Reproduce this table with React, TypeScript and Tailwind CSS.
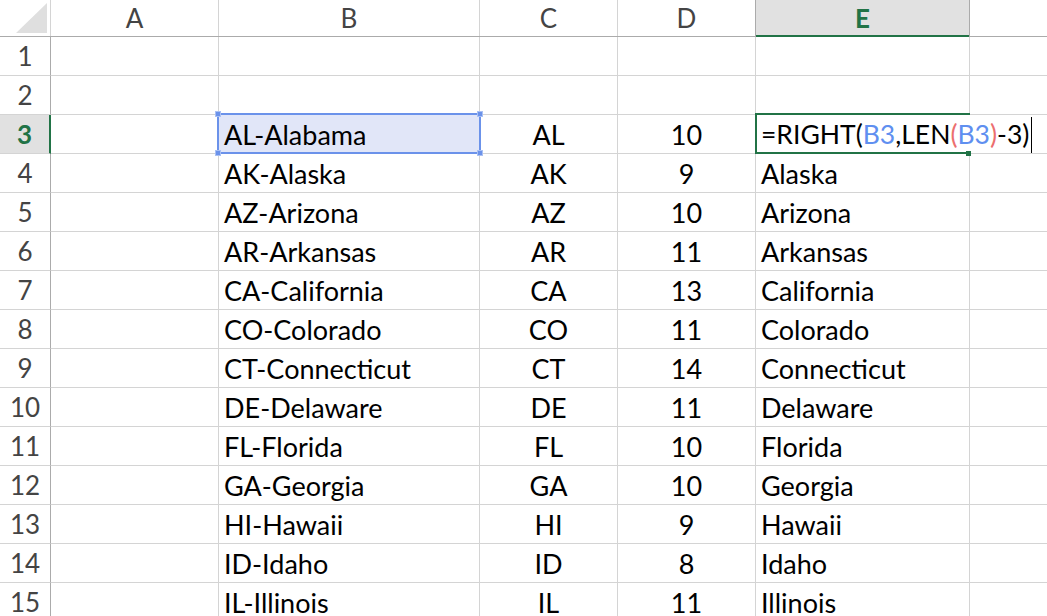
const FONT = { fontFamily: "Lato, 'Open Sans', sans-serif" };

type Row = { n: number; b: string; c: string; d: string; e: string };

const rows: Row[] = [
  { n: 1, b: '', c: '', d: '', e: '' },
  { n: 2, b: '', c: '', d: '', e: '' },
  { n: 3, b: 'AL-Alabama', c: 'AL', d: '10', e: '' },
  { n: 4, b: 'AK-Alaska', c: 'AK', d: '9', e: 'Alaska' },
  { n: 5, b: 'AZ-Arizona', c: 'AZ', d: '10', e: 'Arizona' },
  { n: 6, b: 'AR-Arkansas', c: 'AR', d: '11', e: 'Arkansas' },
  { n: 7, b: 'CA-California', c: 'CA', d: '13', e: 'California' },
  { n: 8, b: 'CO-Colorado', c: 'CO', d: '11', e: 'Colorado' },
  { n: 9, b: 'CT-Connecticut', c: 'CT', d: '14', e: 'Connecticut' },
  { n: 10, b: 'DE-Delaware', c: 'DE', d: '11', e: 'Delaware' },
  { n: 11, b: 'FL-Florida', c: 'FL', d: '10', e: 'Florida' },
  { n: 12, b: 'GA-Georgia', c: 'GA', d: '10', e: 'Georgia' },
  { n: 13, b: 'HI-Hawaii', c: 'HI', d: '9', e: 'Hawaii' },
  { n: 14, b: 'ID-Idaho', c: 'ID', d: '8', e: 'Idaho' },
  { n: 15, b: 'IL-Illinois', c: 'IL', d: '11', e: 'Illinois' },
];

function Handle({ className }: { className: string }) {
  return <div className={`absolute w-[6px] h-[6px] bg-[#6b92ea] border border-[#a9c0f3] z-20 ${className}`} />;
}

function Formula() {
  return (
    <div className="relative z-10 flex items-center whitespace-nowrap pl-[5px] pt-[2px] h-full text-black text-[26.5px]">
      <span className="shrink-0">=RIGHT(</span>
      <span className="shrink-0 text-[#5f8ff0]">B3</span>
      <span className="shrink-0">,LEN</span>
      <span className="shrink-0 text-[#ec6f6f]">(</span>
      <span className="shrink-0 text-[#5f8ff0]">B3</span>
      <span className="shrink-0 text-[#ec6f6f]">)</span>
      <span className="shrink-0">-3)</span>
      <span className="shrink-0 ml-[2px] w-px h-[36px] bg-black" />
    </div>
  );
}

export default function App() {
  return (
    <div className="w-[1047px] h-[616px] overflow-hidden bg-white" style={FONT}>
      {/* column headers */}
      <div className="flex h-[37px] border-b border-[#ababab] text-[26px] text-[#444]">
        <div className="w-[51px] shrink-0 border-r border-[#d4d4d4] relative">
          <svg className="absolute left-0 top-0" width="50" height="36" viewBox="0 0 50 36">
            <polygon points="16,33 47,33 47,3" fill="#dfdfdf" />
          </svg>
        </div>
        <div className="w-[168px] shrink-0 border-r border-[#d4d4d4] flex items-center justify-center">A</div>
        <div className="w-[261px] shrink-0 border-r border-[#d4d4d4] flex items-center justify-center">B</div>
        <div className="w-[138px] shrink-0 border-r border-[#d4d4d4] flex items-center justify-center">C</div>
        <div className="w-[138px] shrink-0 border-r border-[#ababab] flex items-center justify-center">D</div>
        <div className="w-[214px] shrink-0 border-r border-[#ababab] bg-[#e1e1e1] flex items-center justify-center font-bold text-[#217346] relative">
          E
          <div className="absolute left-0 right-0 bottom-[-1px] h-[2px] bg-[#217346]" />
        </div>
        <div className="w-[166px] shrink-0 flex items-center justify-center">F</div>
      </div>

      {rows.map((r) => {
        const active = r.n === 3;
        return (
          <div key={r.n} className="flex h-[39px] text-[27px]">
            <div
              className={`w-[51px] shrink-0 border-b border-[#d4d4d4] flex items-center justify-center text-[26px] pt-[1px] ${
                active
                  ? 'bg-[#e1e1e1] text-[#217346] font-bold border-r-2 border-r-[#217346]'
                  : 'text-[#444] border-r border-r-[#ababab]'
              }`}
            >
              {r.n}
            </div>
            <div className="w-[168px] shrink-0 border-r border-b border-[#d4d4d4]" />
            <div
              className={`w-[261px] shrink-0 border-r border-b border-[#d4d4d4] flex items-center pl-[5px] pt-[2px] text-black relative ${
                active ? 'bg-[#e1e6f8]' : ''
              }`}
            >
              {r.b}
              {active && (
                <>
                  <div className="absolute left-[-2px] top-[-2px] right-[-2px] bottom-[-1px] border-2 border-[#6b92ea] z-10" />
                  <Handle className="left-[-4px] top-[-4px]" />
                  <Handle className="right-[-4px] top-[-4px]" />
                  <Handle className="left-[-4px] bottom-[-3px]" />
                  <Handle className="right-[-4px] bottom-[-3px]" />
                </>
              )}
            </div>
            <div className="w-[138px] shrink-0 border-r border-b border-[#d4d4d4] flex items-center justify-center pt-[2px] text-black">
              {r.c}
            </div>
            <div className="w-[138px] shrink-0 border-r border-b border-[#d4d4d4] flex items-center justify-center pt-[2px] text-black">
              {r.d}
            </div>
            {active ? (
              <div className="w-[214px] shrink-0 border-b border-[#d4d4d4] border-r border-r-white relative">
                <Formula />
                <div className="absolute left-[-1px] top-[-2px] right-[-1px] bottom-[-1px] border-2 border-r-0 border-[#217346] z-20" />
                <div className="absolute right-[-2px] bottom-[-3px] w-[5px] h-[5px] bg-[#217346] z-20" />
              </div>
            ) : (
              <div className="w-[214px] shrink-0 border-r border-b border-[#d4d4d4] flex items-center pl-[5px] pt-[2px] text-black">
                {r.e}
              </div>
            )}
            <div className="w-[166px] shrink-0 border-b border-[#d4d4d4]" />
          </div>
        );
      })}
    </div>
  );
}
